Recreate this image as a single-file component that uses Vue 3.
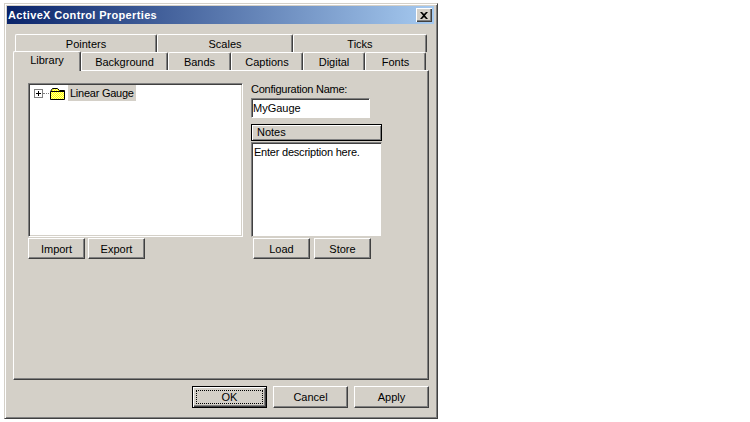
<script setup>
const row1 = [
  { label: 'Pointers', w: 142 },
  { label: 'Scales', w: 136 },
  { label: 'Ticks', w: 134 },
]
const row2 = [
  { label: 'Library', w: 68, active: true },
  { label: 'Background', w: 87 },
  { label: 'Bands', w: 63 },
  { label: 'Captions', w: 72 },
  { label: 'Digital', w: 62 },
  { label: 'Fonts', w: 61 },
]
</script>

<template>
  <div class="window">
    <div class="titlebar">
      <span class="title">ActiveX Control Properties</span>
      <button class="close">
        <svg width="8" height="7" viewBox="0 0 8 7"><path d="M0 0h2l2 2 2-2h2L5 3.500 8 7H6L4 5 2 7H0l3-3.500z" fill="#000" /></svg>
      </button>
    </div>
    <div class="body">
      <div class="tabs back">
        <div v-for="t in row1" :key="t.label" class="tab" :style="{ width: t.w + 'px' }">{{ t.label }}</div>
      </div>
      <div class="tabs front">
        <div v-for="t in row2" :key="t.label" class="tab" :class="{ active: t.active }" :style="{ width: t.w + 'px' }">{{ t.label }}</div>
      </div>
      <div class="panel">
        <div class="left">
          <div class="tree">
            <div class="node">
              <span class="expander"><svg width="9" height="9" viewBox="0 0 9 9"><rect x=".5" y=".5" width="8" height="8" fill="#fff" stroke="#808080" /><path d="M2 4.500h5M4.500 2v5" stroke="#000" /></svg></span>
              <span class="dots"></span>
              <svg class="folder" width="16" height="13" viewBox="0 0 16 13">
                <defs>
                  <pattern id="dither" width="2" height="2" patternUnits="userSpaceOnUse">
                    <rect width="2" height="2" fill="#ffff00" />
                    <rect width="1" height="1" fill="#ffffa0" />
                    <rect x="1" y="1" width="1" height="1" fill="#ffffa0" />
                  </pattern>
                </defs>
                <path d="M.5 4.500 2.500 1.500h5l2 2h5v9H.5z" fill="url(#dither)" stroke="#000" />
                <path d="M1 4.500h13" stroke="#000" />
              </svg>
              <span class="node-label">Linear Gauge</span>
            </div>
          </div>
          <div class="btns">
            <button class="btn sm">Import</button>
            <button class="btn sm">Export</button>
          </div>
        </div>
        <div class="right">
          <label class="cfg">Configuration Name:</label>
          <div class="input">MyGauge</div>
          <div class="notes-head"><span>Notes</span></div>
          <div class="notes">Enter description here.</div>
          <div class="btns btns-r">
            <button class="btn sm">Load</button>
            <button class="btn sm">Store</button>
          </div>
        </div>
      </div>
      <div class="footer">
        <button class="btn lg default"><span class="focus">OK</span></button>
        <button class="btn lg">Cancel</button>
        <button class="btn lg">Apply</button>
      </div>
    </div>
  </div>
</template>

<style scoped>
.window {
  box-sizing: border-box;
  width: 434px;
  height: 416px;
  margin: 3px 0 0 4px;
  background: #d4d0c8;
  border: 1px solid;
  border-color: #d4d0c8 #404040 #404040 #d4d0c8;
  box-shadow: inset 1px 1px 0 #fff, inset -1px -1px 0 #808080;
  padding: 2px 3px 2px 2px;
  font: 11px "Liberation Sans", Arial, sans-serif;
  color: #000;
  display: flex;
  flex-direction: column;
}
.titlebar {
  height: 18px;
  flex: none;
  background: linear-gradient(90deg, #0a246a, #a6caf0);
  display: flex;
  align-items: center;
  justify-content: space-between;
  padding: 0 2px 0 1px;
}
.title {
  color: #fff;
  font-weight: 700;
  font-size: 11px;
  letter-spacing: .35px;
}
.close {
  box-sizing: border-box;
  width: 16px;
  height: 14px;
  padding: 0;
  background: #d4d0c8;
  border: 0;
  box-shadow: inset 1px 1px 0 #fff, inset -1px -1px 0 #404040, inset -2px -2px 0 #808080;
  display: flex;
  align-items: center;
  justify-content: center;
}
.body {
  flex: 1;
  display: flex;
  flex-direction: column;
  padding: 10px 0 0 6px;
  min-height: 0;
}
.tabs {
  display: flex;
  flex: none;
}
.back {
  padding-left: 2px;
  height: 18px;
}
.front {
  height: 18px;
  position: relative;
  z-index: 1;
  align-items: flex-end;
}
.tab {
  box-sizing: border-box;
  height: 18px;
  flex: none;
  text-align: center;
  line-height: 18px;
  background: #d4d0c8;
  border-top: 1px solid #fff;
  border-left: 1px solid #fff;
  border-right: 1px solid #404040;
  box-shadow: inset -1px 0 0 #808080;
  border-top-left-radius: 2px;
  border-top-right-radius: 2px;
}
.active {
  height: 20px;
  margin-bottom: -1px;
  position: relative;
  z-index: 2;
  line-height: 16px;
}
.panel {
  flex: none;
  box-sizing: border-box;
  height: 310px;
  width: 416px;
  border: 1px solid;
  border-color: #fff #404040 #404040 #fff;
  box-shadow: inset -1px -1px 0 #808080;
  display: flex;
  padding: 12px 0 0 14px;
  gap: 8px;
}
.left {
  width: 215px;
  flex: none;
}
.tree {
  box-sizing: border-box;
  height: 154px;
  background: #fff;
  border: 1px solid;
  border-color: #808080 #fff #fff #808080;
  box-shadow: inset 1px 1px 0 #404040, inset -1px -1px 0 #d4d0c8;
  padding: 1px 4px;
}
.node {
  display: flex;
  align-items: center;
  height: 16px;
}
.expander {
  display: flex;
  width: 9px;
  margin-left: 1px;
}
.dots {
  width: 6px;
  border-top: 1px dotted #808080;
}
.folder {
  margin: 0 2px 0 1px;
}
.node-label {
  background: #d4d0c8;
  padding: 0 2px;
  line-height: 16px;
  letter-spacing: -.25px;
}
.btns {
  display: flex;
  gap: 3px;
  margin-top: 1px;
}
.btn {
  box-sizing: border-box;
  font: inherit;
  color: #000;
  padding: 0;
  background: #d4d0c8;
  border: 1px solid;
  border-color: #fff #404040 #404040 #fff;
  box-shadow: inset -1px -1px 0 #808080;
}
.sm {
  width: 57px;
  height: 21px;
}
.right {
  width: 132px;
  flex: none;
  display: flex;
  flex-direction: column;
}
.cfg {
  line-height: 13px;
  letter-spacing: -.25px;
}
.input {
  box-sizing: border-box;
  width: 119px;
  height: 20px;
  margin-top: 2px;
  background: #fff;
  border: 1px solid;
  border-color: #808080 #fff #fff #808080;
  box-shadow: inset 1px 1px 0 #404040;
  padding: 2px 0 0 1px;
  line-height: 14px;
}
.notes-head {
  box-sizing: border-box;
  width: 131px;
  height: 17px;
  margin-top: 6px;
  border: 1px solid #000;
  background: #d4d0c8;
  box-shadow: inset 1px 1px 0 #fff, inset -1px -1px 0 #808080;
  padding-left: 5px;
  line-height: 15px;
}
.notes {
  box-sizing: border-box;
  width: 131px;
  height: 95px;
  margin-top: 1px;
  background: #fff;
  border: 1px solid;
  border-color: #808080 #d4d0c8 #d4d0c8 #808080;
  box-shadow: inset 1px 1px 0 #404040;
  padding: 2px 2px;
  line-height: 14px;
  letter-spacing: -.22px;
}
.btns-r {
  padding-left: 2px;
  gap: 4px;
}
.footer {
  display: flex;
  justify-content: flex-end;
  gap: 6px;
  margin-top: 6px;
  width: 416px;
}
.lg {
  width: 75px;
  height: 22px;
}
.default {
  border: 1px solid #000;
  box-shadow: inset 1px 1px 0 #fff, inset -1px -1px 0 #404040, inset -2px -2px 0 #808080;
}
.focus {
  display: block;
  margin: 2px 3px;
  height: 14px;
  border: 1px dotted #000;
  box-sizing: border-box;
  line-height: 12px;
}
</style>

<style>
html, body { background: #fff; }
</style>
